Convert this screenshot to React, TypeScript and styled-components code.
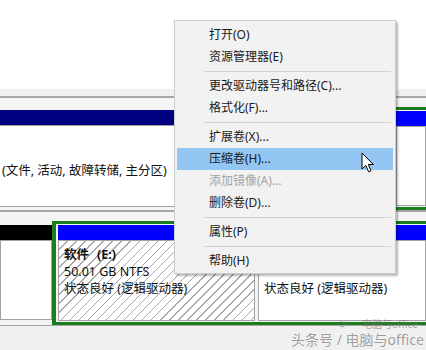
import * as React from "react";
import styled, { createGlobalStyle } from "styled-components";

const GlobalStyle = createGlobalStyle`
  body {
    margin: 0;
    background: #ffffff;
    font-family: "Noto Sans", "Noto Sans CJK SC", sans-serif;
  }
`;

const Screen = styled.div`
  position: relative;
  width: 426px;
  height: 350px;
  overflow: hidden;
  background: #f0f0f0;
  font-family: "Noto Sans", "Noto Sans CJK SC", sans-serif;
  color: #111;
`;

const TopPane = styled.div`
  height: 89px;
  background: #ffffff;
`;

const Band = styled.div`
  height: 7px;
  background: #f0f0f0;
`;

const DiskRow = styled.div<{ $top: number; $pad: number }>`
  display: flex;
  align-items: flex-start;
  border-top: ${(p) => p.$top}px solid #a6a6a6;
  border-bottom: 1px solid #a6a6a6;
  padding-top: ${(p) => p.$pad}px;
  background: #f4f4f4;
`;

const Partition = styled.div<{ $width?: number; $offset?: number; $shift?: number }>`
  display: flex;
  flex-direction: column;
  flex: ${(p) => (p.$width ? `0 0 ${p.$width}px` : "1 1 auto")};
  margin-top: ${(p) => p.$offset ?? 0}px;
  margin-left: ${(p) => p.$shift ?? 0}px;
  min-width: 0;
`;

const Bar = styled.div<{ $color: string }>`
  height: 15px;
  background: ${(p) => p.$color};
`;

const Body = styled.div<{ $height: number; $hatched?: boolean; $padTop?: number }>`
  box-sizing: border-box;
  height: ${(p) => p.$height}px;
  border: 1px solid #a3a3a3;
  padding: ${(p) => p.$padTop ?? 5}px 4px 0 5px;
  background: ${(p) =>
    p.$hatched
      ? "repeating-linear-gradient(135deg, #ffffff 0 5.4px, #a8a8a8 5.4px 6.4px)"
      : "#ffffff"};
  font-size: 12.5px;
  line-height: 17px;
  white-space: nowrap;
  overflow: hidden;
`;

const Extended = styled.div<{ $width?: number }>`
  display: flex;
  gap: 3px;
  flex: ${(p) => (p.$width ? `0 0 ${p.$width}px` : "1 1 auto")};
  border: 3px solid #1b7d1b;
  border-left-width: 4px;
  border-right: none;
  padding: 1px 0 1px 2px;
  background: #f4f4f4;
  min-width: 0;
`;

const Label = styled.div`
  font-weight: bold;
`;

const Spacer = styled.span`
  display: inline-block;
  width: 8px;
`;

const Menu = styled.div`
  position: absolute;
  left: 174px;
  top: 20px;
  width: 222px;
  box-sizing: border-box;
  padding: 3px 2px 1px 2px;
  background: #f2f2f2;
  border: 1px solid #cccccc;
  box-shadow: 2px 2px 2px rgba(0, 0, 0, 0.28);
  font-size: 12px;
`;

const MenuItem = styled.div<{ $active?: boolean; $disabled?: boolean }>`
  height: 22px;
  line-height: 22px;
  padding-left: 32px;
  background: ${(p) => (p.$active ? "#93c6f2" : "transparent")};
  color: ${(p) => (p.$disabled ? "#a2a2a2" : "#1a1a1a")};
  white-space: nowrap;
`;

const Separator = styled.div`
  height: 7px;
  display: flex;
  align-items: center;
  margin: 0 2px 0 27px;
  &::after {
    content: "";
    flex: 1;
    height: 1px;
    background: #d2d2d2;
  }
`;

const Cursor = styled.svg`
  position: absolute;
  left: 361px;
  top: 152px;
`;

const Watermark = styled.div`
  position: absolute;
  left: 291px;
  top: 331px;
  font-size: 14px;
  line-height: 17px;
  color: rgba(140, 140, 140, 0.85);
  text-shadow: 0 0 2px #ffffff;
  white-space: nowrap;
`;

const WatermarkSmall = styled.div`
  position: absolute;
  left: 338px;
  top: 319px;
  display: flex;
  align-items: center;
  gap: 14px;
  font-size: 10px;
  line-height: 11px;
  color: rgba(110, 110, 110, 0.6);
  white-space: nowrap;
`;

const menuItems: Array<{ text: string; active?: boolean; disabled?: boolean } | "sep"> = [
  { text: "打开(O)" },
  { text: "资源管理器(E)" },
  "sep",
  { text: "更改驱动器号和路径(C)..." },
  { text: "格式化(F)..." },
  "sep",
  { text: "扩展卷(X)..." },
  { text: "压缩卷(H)...", active: true },
  { text: "添加镜像(A)...", disabled: true },
  { text: "删除卷(D)..." },
  "sep",
  { text: "属性(P)" },
  "sep",
  { text: "帮助(H)" },
];

export default function App() {
  return (
    <Screen>
      <GlobalStyle />
      <TopPane />
      <Band />
      <DiskRow $top={2} $pad={9}>
        <Partition $offset={3} $shift={-4}>
          <Bar $color="#000080" />
          <Body $height={82} $padTop={36}>
            (文件, 活动, 故障转储, 主分区)
          </Body>
        </Partition>
        <Extended $width={30}>
          <Partition>
            <Bar $color="#0000ff" />
            <Body $height={80} />
          </Partition>
        </Extended>
      </DiskRow>
      <DiskRow $top={1} $pad={9}>
        <Partition $width={52} $offset={4}>
          <Bar $color="#000000" />
          <Body $height={80} />
        </Partition>
        <Extended>
          <Partition $width={197}>
            <Bar $color="#0000ff" />
            <Body $height={81} $hatched>
              <Label>
                软件<Spacer />(E:)
              </Label>
              <div>50.01 GB NTFS</div>
              <div>状态良好 (逻辑驱动器)</div>
            </Body>
          </Partition>
          <Partition>
            <Bar $color="#0000ff" />
            <Body $height={81} $padTop={39}>
              状态良好 (逻辑驱动器)
            </Body>
          </Partition>
        </Extended>
      </DiskRow>

      <Menu>
        {menuItems.map((item, i) =>
          item === "sep" ? (
            <Separator key={i} />
          ) : (
            <MenuItem key={i} $active={item.active} $disabled={item.disabled}>
              {item.text}
            </MenuItem>
          ),
        )}
      </Menu>

      <Cursor width="14" height="22" viewBox="0 0 14 22">
        <path
          d="M1 1 L1 17 L4.8 13.4 L7.6 19.8 L10 18.8 L7.3 12.5 L12.4 12.5 Z"
          fill="#ffffff"
          stroke="#000000"
          strokeWidth="1"
          strokeLinejoin="miter"
        />
      </Cursor>

      <WatermarkSmall>
        <svg width="10" height="10" viewBox="0 0 10 10">
          <path d="M1 3 Q3 0 5 3 T9 3 M2 7 Q4 5 6 7" stroke="rgba(110,110,110,0.6)" fill="none" />
        </svg>
        <span>电脑与office</span>
      </WatermarkSmall>
      <Watermark>头条号 / 电脑与office</Watermark>
    </Screen>
  );
}
